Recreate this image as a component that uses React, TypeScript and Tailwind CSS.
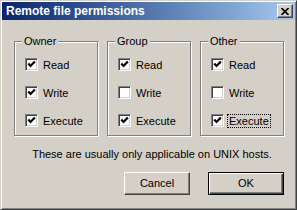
import React from "react";

type Perm = { label: string; checked: boolean; focused?: boolean };

type Group = { title: string; perms: Perm[] };

const groups: Group[] = [
  {
    title: "Owner",
    perms: [
      { label: "Read", checked: true },
      { label: "Write", checked: true },
      { label: "Execute", checked: true },
    ],
  },
  {
    title: "Group",
    perms: [
      { label: "Read", checked: true },
      { label: "Write", checked: false },
      { label: "Execute", checked: true },
    ],
  },
  {
    title: "Other",
    perms: [
      { label: "Read", checked: true },
      { label: "Write", checked: false },
      { label: "Execute", checked: true, focused: true },
    ],
  },
];

function CheckBox({ checked }: { checked: boolean }) {
  return (
    <div className="w-[13px] h-[13px] shrink-0 bg-white border border-t-[#808080] border-l-[#808080] border-r-white border-b-white shadow-[inset_1px_1px_#404040,inset_-1px_-1px_#d4d0c8] flex items-center justify-center">
      {checked && (
        <svg width="9" height="9" viewBox="0 0 9 9">
          <path d="M1.3 3.6 L3.5 6 L7.9 1.4" fill="none" stroke="#000" strokeWidth="2.2" />
        </svg>
      )}
    </div>
  );
}

function GroupBox({ group }: { group: Group }) {
  return (
    <div className="relative w-[84px] h-[95px] border border-[#808080] shadow-[inset_1px_1px_#fff,1px_1px_#fff] pl-[10px] pt-[16px]">
      <span className="absolute -top-[8px] left-[7px] px-[2px] bg-[#d4d0c8] leading-[14px]">
        {group.title}
      </span>
      <div className="flex flex-col gap-[15px]">
        {group.perms.map((p, i) => (
          <div key={i} className="flex items-center h-[13px]">
            <CheckBox checked={p.checked} />
            <span
              className={
                "ml-[3px] px-[1px] leading-[12px] border " +
                (p.focused ? "border-dotted border-black" : "border-transparent")
              }
            >
              {p.label}
            </span>
          </div>
        ))}
      </div>
    </div>
  );
}

export default function App() {
  return (
    <div
      className="w-[297px] h-[210px] bg-[#d4d0c8] border border-t-[#d4d0c8] border-l-[#d4d0c8] border-r-[#404040] border-b-[#404040] shadow-[inset_1px_1px_#fff,inset_-1px_-1px_#808080] p-[1px] flex flex-col text-[11px] text-black overflow-hidden"
      style={{ fontFamily: '"Liberation Sans", Arial, sans-serif' }}
    >
      {/* Title bar */}
      <div className="h-[18px] shrink-0 flex items-center justify-between bg-gradient-to-r from-[#0a246a] to-[#a6caf0] pl-[4px] pr-[2px]">
        <span className="text-white font-bold text-[12px] leading-[14px]">Remote file permissions</span>
        <button className="w-[16px] h-[14px] bg-[#d4d0c8] border border-t-white border-l-white border-r-[#404040] border-b-[#404040] shadow-[inset_-1px_-1px_#808080] flex items-center justify-center">
          <svg width="8" height="7" viewBox="0 0 8 7">
            <path d="M0.5 0 L7.5 7 M7.5 0 L0.5 7" stroke="#000" strokeWidth="1.6" />
          </svg>
        </button>
      </div>

      {/* Body */}
      <div className="flex flex-col pl-[12px] pr-[11px] pt-[21px]">
        <div className="flex gap-[9px]">
          {groups.map((g) => (
            <GroupBox key={g.title} group={g} />
          ))}
        </div>

        <p className="mt-[12px] leading-[13px] text-center pl-[6px]">
          These are usually only applicable on UNIX hosts.
        </p>

        <div className="mt-[11px] flex justify-end gap-[18px]">
          <button className="w-[66px] h-[23px] bg-[#d4d0c8] border border-t-white border-l-white border-r-[#404040] border-b-[#404040] shadow-[inset_-1px_-1px_#808080] text-[11px]">
            Cancel
          </button>
          <button className="w-[76px] h-[23px] bg-[#d4d0c8] border border-black shadow-[inset_1px_1px_#fff,inset_-1px_-1px_#404040,inset_-2px_-2px_#808080] text-[11px]">
            OK
          </button>
        </div>
      </div>
    </div>
  );
}
